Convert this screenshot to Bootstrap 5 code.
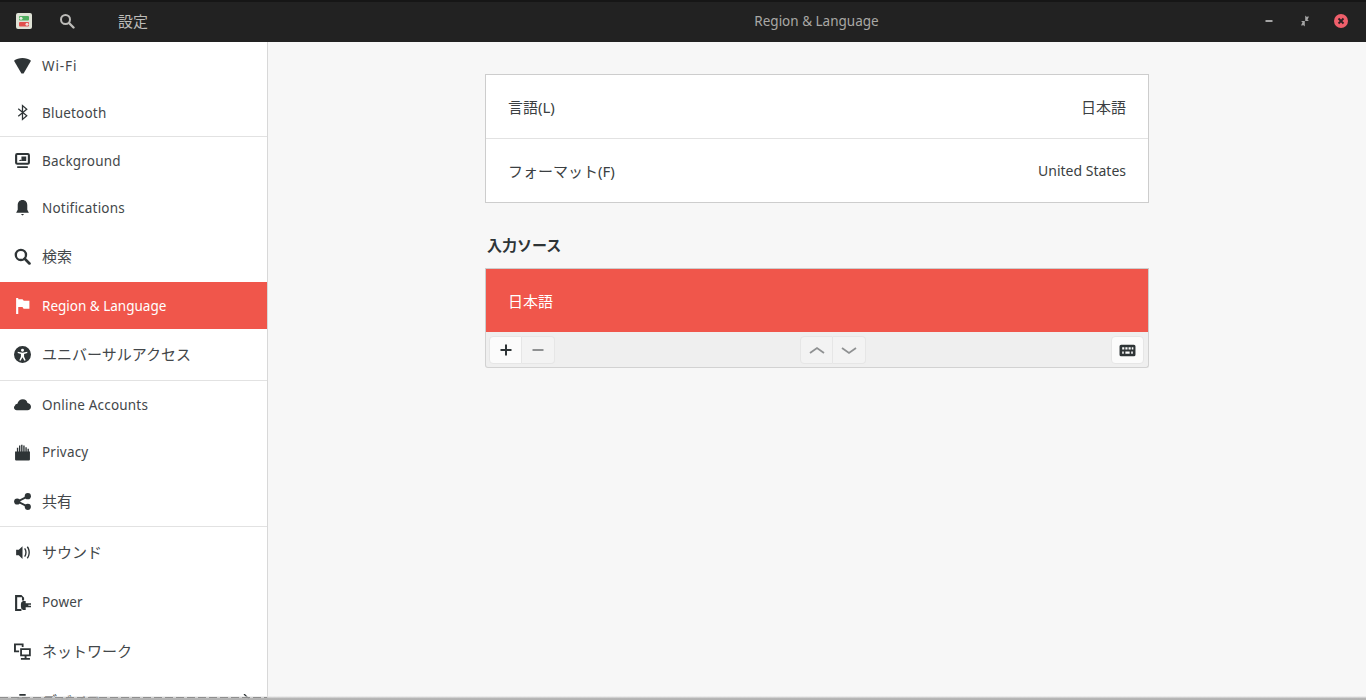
<!DOCTYPE html>
<html lang="ja">
<head>
<meta charset="utf-8">
<title>Region &amp; Language</title>
<link href="https://cdn.jsdelivr.net/npm/bootstrap@5.3.0/dist/css/bootstrap.min.css" rel="stylesheet">
<style>
html,body{height:700px;overflow:hidden}
body{font-family:"Noto Sans","Noto Sans CJK JP",sans-serif;font-size:14px;color:#2e3436;background:#f7f7f7}
.ja{font-size:15px}
.shell{height:700px;overflow:hidden}
.topbar{height:42px;background:#222222;color:#bdbcb9;border-top:2px solid #161616;padding-bottom:2px;flex:none}
.tb-left{width:267px}
.tb-app{margin-left:16px;width:16px;height:16px}
.tb-search{margin-left:27px}
.tb-name{margin-left:43px}
.tb-title{font-size:13.5px;color:#a9a8a5}
.tb-ctrl{gap:20px;padding-right:17px}
.sidebar{width:268px;background:#fff;border-right:1px solid #d8d8d8;flex:none;overflow:hidden}
.side-row{padding-left:14px;gap:11px;color:#43474a;font-size:13.5px;flex:none}
.side-row svg{width:17px;height:17px;flex:none;fill:#2e3436}
.side-row.on{background:#f0564b;color:#fff}
.side-row.on svg{fill:#fff}
.lat{letter-spacing:.2px}
.drop{padding-top:2px}
.tight{letter-spacing:0}
.spaced{letter-spacing:.9px}
.h47{height:47px}.h48{height:48px}.h49{height:49px}.h51{height:51px}.h52{height:52px}
.sep{border-bottom:1px solid #e2e2e2}
.main-area{background:#f7f7f7}
.panel-col{width:664px;padding-top:32px}
.frame{border:1px solid #cdcdcd;background:#fff}
.lang-row{height:63px;padding:0 22px;color:#3b3f42}
.lang-row+.lang-row{height:64px;border-top:1px solid #e2e2e2}
.heading{font-weight:700;margin:32px 0 13px 2px;line-height:20px;color:#2e3436}
.src-row{height:63px;background:#f0564b;color:#fff;padding-left:22px}
.tools{height:36px;background:#efefef;padding:4px 4px 0 3px;border:1px solid #d2d2d2;border-top:0;border-radius:0 0 3px 3px}
.tool-btn{width:33px;height:28px;padding:0;border:1px solid #e6e6e6;background:#f3f3f3;border-radius:0;--bs-btn-hover-bg:#f3f3f3}
.tool-btn svg{width:14px;height:14px}
.tool-btn svg.chevron{width:18px;height:18px}
.tool-btn svg.kbd{width:17px;height:17px}
.tool-btn.lead-btn{border-radius:4px 0 0 4px}
.tool-btn.tail-btn{border-radius:0 4px 4px 0;border-left:0}
.tool-btn.solo-btn{border-radius:4px;background:#fbfbfb}
.tool-btn.live{background:#fbfbfb}
.frame-head{border-bottom:0}
.chev{position:absolute;left:243px;top:694px;width:8px;height:6px}
.glitch-bar{position:absolute;left:0;right:0;bottom:0;height:4px;background:linear-gradient(180deg,rgba(225,225,225,.5) 0,rgba(225,225,225,.6) 25%,rgba(176,176,176,.9) 50%,#b0b0b0 100%)}
.glitch{position:absolute;left:0;width:267px;bottom:2px;height:1px;background-image:repeating-linear-gradient(90deg,#8f8f8f 0 8px,transparent 8px 11px)}
</style>
</head>
<body>
<div class="shell d-flex flex-column position-relative">
  <header class="topbar d-flex align-items-center">
    <div class="tb-left d-flex align-items-center">
      <svg class="tb-app" viewBox="0 0 16 16"><rect width="16" height="16" rx="2" fill="#dfe2d6"/><rect x="3" y="3" width="10" height="4.500" rx="1" fill="#4fae5f"/><circle cx="5" cy="5.200" r="1.500" fill="#e6ece0"/><rect x="3" y="9" width="10" height="4.500" rx="1" fill="#e0504c"/><circle cx="11" cy="11.200" r="1.500" fill="#f3dcd8"/></svg>
      <svg class="tb-search" width="16" height="16" viewBox="0 0 16 16"><circle cx="6.500" cy="6.500" r="4.500" fill="none" stroke="#bdbcb9" stroke-width="2"/><path d="M10 10l4.500 4.500" stroke="#bdbcb9" stroke-width="2.400" stroke-linecap="round"/></svg>
      <span class="tb-name ja">設定</span>
    </div>
    <div class="tb-title flex-grow-1 text-center">Region &amp; Language</div>
    <div class="tb-ctrl d-flex align-items-center position-absolute end-0">
      <svg width="16" height="16" viewBox="0 0 16 16"><rect x="4.500" y="7" width="7" height="2" fill="#a5a5a5"/></svg>
      <svg width="16" height="16" viewBox="0 0 16 16"><path d="M8.200 2.500l1.200 1.200L12 3.500 10.500 6.800l1.500 1.200H8.200zM7.800 13.500L6.600 12.300 4 12.500 5.500 9.200 4 8h3.800z" fill="#a5a5a5"/></svg>
      <svg width="16" height="16" viewBox="0 0 16 16"><circle cx="8" cy="8" r="7" fill="#ef5f6b"/><path d="M5.500 5.500l5 5M10.500 5.500l-5 5" stroke="#2a2024" stroke-width="1.800"/></svg>
    </div>
  </header>
  <div class="d-flex flex-grow-1 overflow-hidden">
    <nav class="sidebar d-flex flex-column">
      <div class="side-row h47 d-flex align-items-center"><svg viewBox="0 0 16 16"><path d="M0 3.500C2 1.800 5 1 8 1s6 .8 8 2.500L9 15.500h-2z"/></svg><span class="spaced drop">Wi-Fi</span></div>
      <div class="side-row h47 d-flex align-items-center"><svg viewBox="0 0 16 16"><path d="M4 4.500l8 6.500-4 3.500V1.500l4 3.500-8 6.500" fill="none" stroke="#2e3436" stroke-width="1.200"/></svg><span class="lat drop">Bluetooth</span></div>
      <div class="sep"></div>
      <div class="side-row h47 d-flex align-items-center"><svg viewBox="0 0 16 16"><path fill-rule="evenodd" d="M3 1h10a2 2 0 0 1 2 2v7a2 2 0 0 1-2 2H3a2 2 0 0 1-2-2V3a2 2 0 0 1 2-2zm0 1.800V10h10V2.800zM4.500 8.500L6 7l1 1V4.300h4.500v4.200zM3 13.300h10V15H3z"/></svg><span class="lat drop">Background</span></div>
      <div class="side-row h47 d-flex align-items-center"><svg viewBox="0 0 16 16"><path d="M8 1c2.800 0 4.500 2 4.500 4.800V10l1.500 3H2l1.500-3V5.800C3.500 3 5.200 1 8 1zM6.500 14h3L8 15.500z"/></svg><span class="lat drop">Notifications</span></div>
      <div class="side-row h51 d-flex align-items-center"><svg viewBox="0 0 16 16"><circle cx="6.500" cy="6.500" r="4.800" fill="none" stroke="#2e3436" stroke-width="2.200"/><path d="M10 10l4.500 4.500" stroke="#2e3436" stroke-width="2.600" stroke-linecap="round"/></svg><span class="ja">検索</span></div>
      <div class="side-row on h47 d-flex align-items-center"><svg viewBox="0 0 16 16"><path d="M2 1h2v1h4l1.200 1.500H14.500v7.500H9l-1-1.500H4V16H2z"/></svg><span class="tight drop">Region &amp; Language</span></div>
      <div class="side-row h52 sep d-flex align-items-center"><svg viewBox="0 0 16 16"><path fill-rule="evenodd" d="M8 0a8 8 0 1 1 0 16A8 8 0 0 1 8 0zm0 2.500A1.400 1.400 0 1 0 8 5.300a1.400 1.400 0 0 0 0-2.800zM3.500 5.500v1.200l3 .8v2.500L5 13.500l1.200.4L8 10.500l1.800 3.400 1.200-.4-1.500-3.500V7.500l3-.8V5.500L8 6.300z"/></svg><span class="ja">ユニバーサルアクセス</span></div>
      <div class="side-row h47 d-flex align-items-center"><svg viewBox="0 0 16 16"><path d="M2.500 13.500A2.500 2.500 0 0 1 1 9c.2-1 1-1.700 2.200-1.700C3.700 5 5.700 3 8.300 3c2.500 0 4 1.600 4.400 3.500 1.900.2 3.300 1.700 3.300 3.600 0 2-1.500 3.400-3.300 3.400z"/></svg><span class="lat drop">Online Accounts</span></div>
      <div class="side-row h48 d-flex align-items-center"><svg viewBox="0 0 16 16"><path d="M1 7h1.700v-3.500h1.300V7h.7V1.500H6V7h.7V.8H8V7h.7V1.500H10V7h.7V3h1.300v4h.7V4.500H14V7h1v7.500a1 1 0 0 1-1 1H2a1 1 0 0 1-1-1z"/></svg><span class="spaced-sm lat">Privacy</span></div>
      <div class="side-row h51 sep d-flex align-items-center"><svg viewBox="0 0 16 16"><path d="M12.500 3.500L3.500 8l9 4.500" fill="none" stroke="#2e3436" stroke-width="1.800"/><circle cx="13" cy="3" r="2.900"/><circle cx="3" cy="8" r="2.900"/><circle cx="13" cy="13" r="2.900"/></svg><span class="ja">共有</span></div>
      <div class="side-row h51 d-flex align-items-center"><svg viewBox="0 0 16 16"><path d="M2 5.500h2.500L8 2v12l-3.500-3.500H2zM9.500 4.500c1.500 2 1.500 5 0 7l1 .8c1.900-2.300 1.900-6.300 0-8.600zM12 3c2.200 2.800 2.200 7.200 0 10l1 .8c2.600-3.200 2.600-8.400 0-11.600z"/></svg><span class="ja">サウンド</span></div>
      <div class="side-row h49 d-flex align-items-center"><svg viewBox="0 0 16 16"><path fill-rule="evenodd" d="M1 1h6l2.500 2.500V6H7.500V3H3v11h4v2H1zM8.500 6.500H11v2.200h5V10h-2.500v1H16v1.500h-5V15H8.500A3 3 0 0 1 6.500 12V9.500a3 3 0 0 1 2-3z"/></svg><span class="lat">Power</span></div>
      <div class="side-row h49 d-flex align-items-center"><svg viewBox="0 0 16 16"><path fill-rule="evenodd" d="M0 .5h9v3.300H7.300V2.200H1.800V7h3v1.700H0zM5.800 5h10v7.500h-4V14H15v1.700H6.500V14h3.500v-1.500H5.800zm1.700 1.700v4.100h6.600V6.700z"/></svg><span class="ja">ネットワーク</span></div>
      <div class="side-row h51 d-flex align-items-center"><svg viewBox="0 0 16 16"><path d="M3 4h10v10H3zM5 1h6v1.500H5z"/></svg><span class="ja">デバイス</span></div>
    </nav>
    <main class="main-area flex-grow-1 d-flex justify-content-center">
      <div class="panel-col">
        <div class="frame">
          <div class="lang-row d-flex align-items-center justify-content-between"><span class="ja drop">言語(L)</span><span class="ja drop">日本語</span></div>
          <div class="lang-row d-flex align-items-center justify-content-between"><span class="ja drop">フォーマット(F)</span><span>United States</span></div>
        </div>
        <div class="heading ja">入力ソース</div>
        <div class="frame frame-head">
          <div class="src-row ja d-flex align-items-center"><span class="drop">日本語</span></div>
        </div>
        <div class="tools d-flex align-items-start justify-content-between">
          <div class="d-flex">
            <button class="btn tool-btn lead-btn live d-flex align-items-center justify-content-center" type="button"><svg viewBox="0 0 14 14"><path d="M7 1.500v11M1.500 7h11" stroke="#2e3436" stroke-width="2"/></svg></button>
            <button class="btn tool-btn tail-btn d-flex align-items-center justify-content-center" type="button"><svg viewBox="0 0 14 14"><path d="M1.500 7h11" stroke="#8f9192" stroke-width="2"/></svg></button>
          </div>
          <div class="d-flex">
            <button class="btn tool-btn lead-btn d-flex align-items-center justify-content-center" type="button"><svg class="chevron" viewBox="0 0 18 18"><path d="M2 12l7-5 7 5" fill="none" stroke="#8f9192" stroke-width="1.800"/></svg></button>
            <button class="btn tool-btn tail-btn d-flex align-items-center justify-content-center" type="button"><svg class="chevron" viewBox="0 0 18 18"><path d="M2 7l7 5 7-5" fill="none" stroke="#8f9192" stroke-width="1.800"/></svg></button>
          </div>
          <button class="btn tool-btn solo-btn d-flex align-items-center justify-content-center" type="button"><svg class="kbd" viewBox="0 0 16 16"><path fill="#2e3436" fill-rule="evenodd" d="M2 2.500h12a1.500 1.500 0 0 1 1.500 1.500v8a1.500 1.500 0 0 1-1.500 1.500H2A1.500 1.500 0 0 1 .5 12V4A1.500 1.500 0 0 1 2 2.500zm1 2.500v2h2V5zm3 0v2h2V5zm3 0v2h2V5zm3 0v2h1.500V5zM3 9v2h1.500V9zm3 0v2h4V9zm5.500 0v2H13V9z"/></svg></button>
        </div>
      </div>
    </main>
  </div>
  <svg class="chev" viewBox="0 0 8 6"><path d="M1 0l5 5" stroke="#2e3436" stroke-width="1.300" fill="none"/></svg>
  <div class="glitch-bar"></div>
  <div class="glitch"></div>
</div>
<script src="https://cdn.jsdelivr.net/npm/bootstrap@5.3.0/dist/js/bootstrap.bundle.min.js"></script>
</body>
</html>
